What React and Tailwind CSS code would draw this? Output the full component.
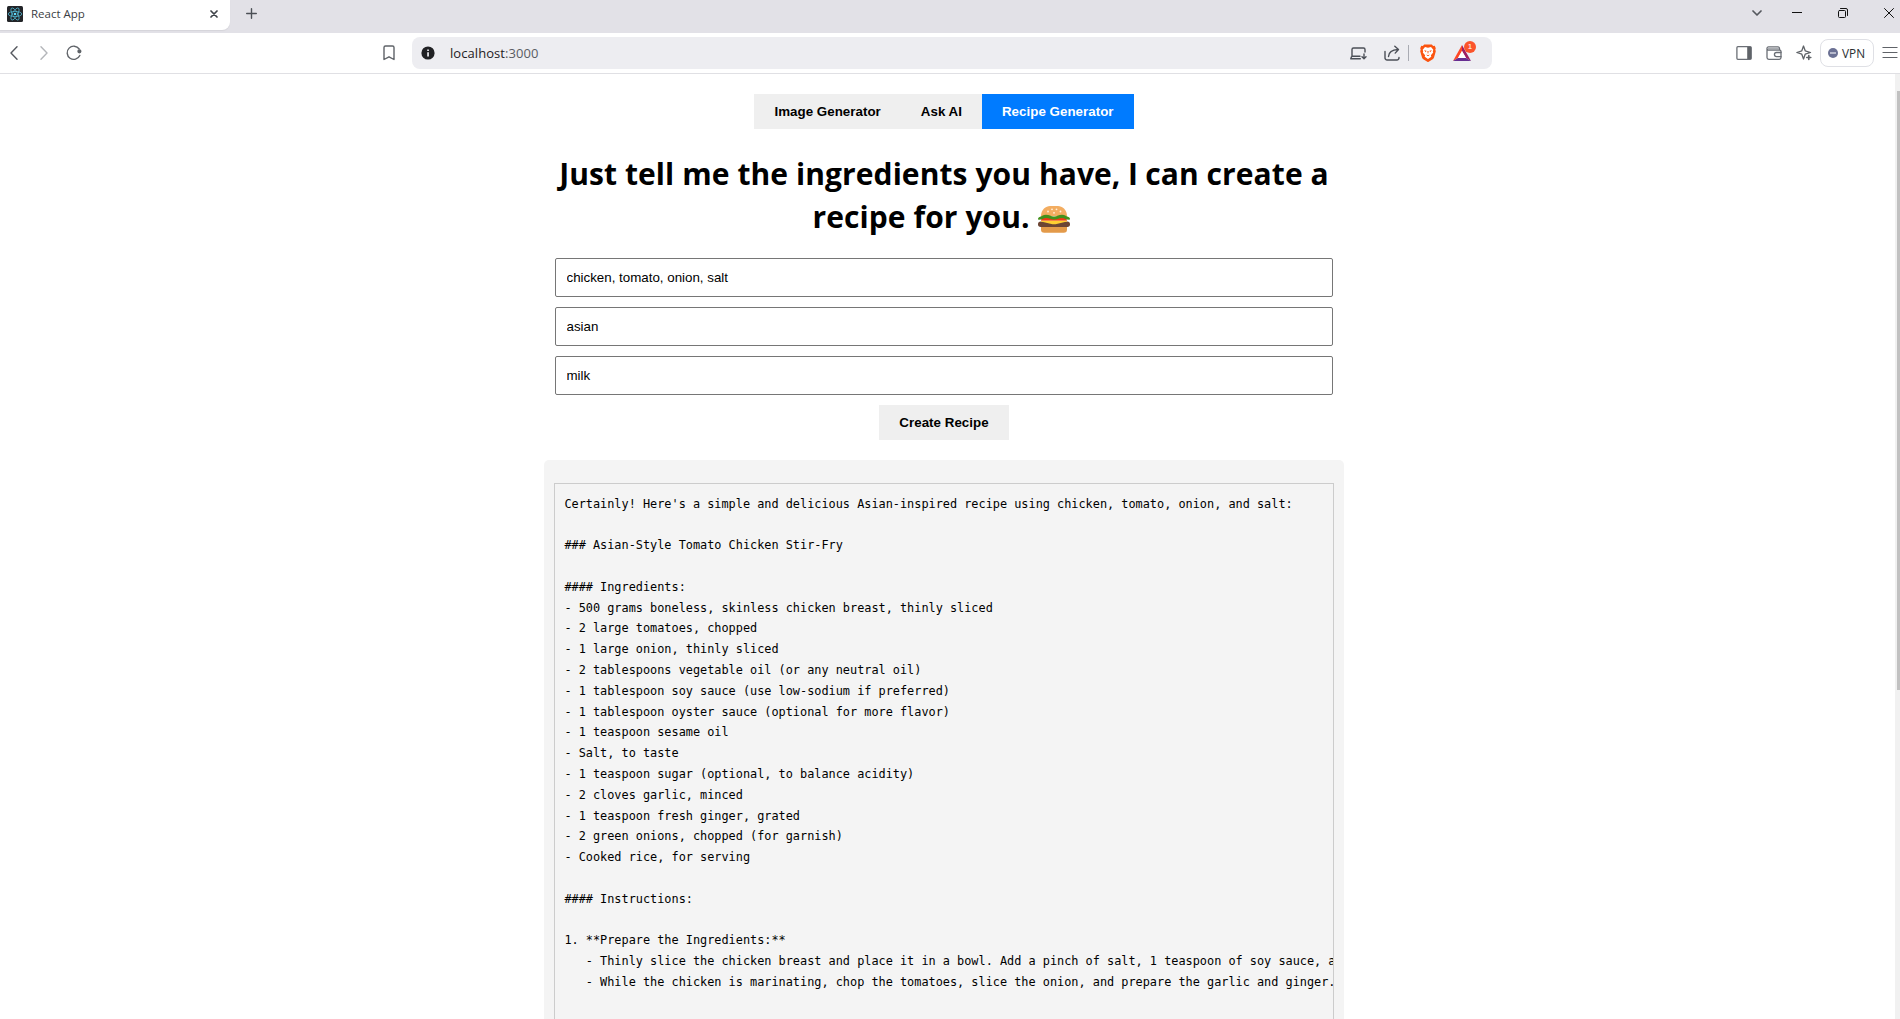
import React from "react";

const uiFont = "font-['Open_Sans',sans-serif]";
const arial = "font-['Liberation_Sans',sans-serif]";

const recipe = `Certainly! Here's a simple and delicious Asian-inspired recipe using chicken, tomato, onion, and salt:

### Asian-Style Tomato Chicken Stir-Fry

#### Ingredients:
- 500 grams boneless, skinless chicken breast, thinly sliced
- 2 large tomatoes, chopped
- 1 large onion, thinly sliced
- 2 tablespoons vegetable oil (or any neutral oil)
- 1 tablespoon soy sauce (use low-sodium if preferred)
- 1 tablespoon oyster sauce (optional for more flavor)
- 1 teaspoon sesame oil
- Salt, to taste
- 1 teaspoon sugar (optional, to balance acidity)
- 2 cloves garlic, minced
- 1 teaspoon fresh ginger, grated
- 2 green onions, chopped (for garnish)
- Cooked rice, for serving

#### Instructions:

1. **Prepare the Ingredients:**
   - Thinly slice the chicken breast and place it in a bowl. Add a pinch of salt, 1 teaspoon of soy sauce, a
   - While the chicken is marinating, chop the tomatoes, slice the onion, and prepare the garlic and ginger.

`;

function Icon({ w, h, className = "", children, stroke = "#5f6368", sw = 1.4 }) {
  return (
    <svg
      width={w}
      height={h}
      viewBox={`0 0 ${w} ${h}`}
      fill="none"
      stroke={stroke}
      strokeWidth={sw}
      strokeLinecap="round"
      strokeLinejoin="round"
      className={`shrink-0 ${className}`}
    >
      {children}
    </svg>
  );
}

function ReactLogo() {
  return (
    <svg width="16" height="16" viewBox="0 0 16 16" className="ml-[7px] shrink-0">
      <rect width="16" height="16" rx="1.5" fill="#222428" />
      <g fill="none" stroke="#4fb4cf" strokeWidth="0.8">
        <ellipse cx="8" cy="8" rx="6.8" ry="2.6" />
        <ellipse cx="8" cy="8" rx="6.8" ry="2.6" transform="rotate(60 8 8)" />
        <ellipse cx="8" cy="8" rx="6.8" ry="2.6" transform="rotate(120 8 8)" />
      </g>
      <circle cx="8" cy="8" r="1.3" fill="#61dafb" />
    </svg>
  );
}

function TabStrip() {
  return (
    <div className="flex h-[33px] items-start bg-[#e2e1e7]">
      <div className="flex h-[30px] w-[230px] items-center rounded-br-lg bg-white pb-[2px] shadow-[0_1px_1px_rgba(0,0,0,0.06)]">
        <ReactLogo />
        <span className={`ml-2 text-[11.5px] leading-4 text-[#3b3e44] ${uiFont}`}>React App</span>
        <Icon w={8} h={8} className="ml-auto mr-[12px]" stroke="#3f4349" sw={1.7}>
          <path d="M1 1l6 6M7 1l-6 6" />
        </Icon>
      </div>
      <Icon w={11} h={11} className="ml-[16px] mt-[8px]" stroke="#4b4f55" sw={1.4}>
        <path d="M5.5 .7v9.6M.7 5.5h9.6" />
      </Icon>
      <div className="ml-auto flex h-[26px] items-center">
        <Icon w={10} h={6} className="mr-[30px]" stroke="#55585e" sw={1.7}>
          <path d="M1 1l4 4 4-4" />
        </Icon>
        <Icon w={10} h={10} className="mr-[36px]" stroke="#111" sw={1}>
          <path d="M0 4.5h10" />
        </Icon>
        <Icon w={10} h={10} className="mr-[36px]" stroke="#111" sw={1}>
          <rect x=".5" y="2.5" width="7" height="7" rx="1" />
          <path d="M2.5 .5H8a1.5 1.5 0 0 1 1.5 1.5v5.5" />
        </Icon>
        <Icon w={10} h={10} className="mr-[6px]" stroke="#111" sw={1}>
          <path d="M.5 .5l9 9M9.5 .5l-9 9" />
        </Icon>
      </div>
    </div>
  );
}

function BraveLion() {
  return (
    <svg width="16" height="18" viewBox="0 0 16 18" className="ml-[11px] shrink-0">
      <path d="M4.2.4h7.6l1.4 1.5 1.5-.1 1.1 2.5-.5 1.3.5 1.7-1.8 6.2c-.2.8-.7 1.4-1.3 1.8L8.7 17.7a1.3 1.3 0 0 1-1.4 0l-4-2.4c-.6-.4-1.1-1-1.3-1.8L.2 7.3l.5-1.7L.2 4.3l1.1-2.5 1.5.1z" fill="#fb5410" />
      <path d="M5 3.1l3 .6 3-.6 2.3 2.7-.5 1.6.4 1-2.3 2.9.4 1.4L8 15l-3.3-2.3.4-1.4-2.3-2.9.4-1-.5-1.6z" fill="#fff" />
      <path d="M4 6.3l2.500.5-.6 1.400zM12 6.300l-2.500.5.6 1.400zM7.400 7h1.200l-.3 2.500h-.6zM6.200 10.500l1.800.8 1.800-.8-1.200 1.400H7.400z" fill="#fb5410" />
    </svg>
  );
}

function BatTriangle() {
  return (
    <div className="relative ml-[17px] h-8 w-[26px] shrink-0">
      <svg width="18" height="16" viewBox="0 0 18 16" className="mt-[8px]">
        <path d="M9 0L0 16l5-3 4-7z" fill="#ff4724" />
        <path d="M9 0l9 16-5-3-4-7z" fill="#9e1f63" />
        <path d="M0 16h18l-5-3H5z" fill="#662d91" />
        <path d="M9 6l4 7H5z" fill="#fff" />
      </svg>
      <span className={`absolute left-[11px] top-[4px] flex size-[12px] items-center justify-center rounded-full bg-[#fb542b] text-[8px] leading-none text-white ${arial}`}>
        1
      </span>
    </div>
  );
}

function Toolbar() {
  return (
    <div className="flex h-[41px] items-center border-b border-[#e0e0e4] bg-white">
      <Icon w={8} h={14} className="ml-[10px]" stroke="#55585f">
        <path d="M7 .8L1 7l6 6.2" />
      </Icon>
      <Icon w={8} h={14} className="ml-[22px]" stroke="#b4b6ba">
        <path d="M1 .8L7 7l-6 6.2" />
      </Icon>
      <Icon w={17} h={16} className="ml-[18px]" stroke="#5f6368">
        <path d="M13.2 4A6.6 6.6 0 1 0 13.8 10.5" />
        <circle cx="13.4" cy="6.3" r="1.4" fill="#5f6368" />
      </Icon>
      <Icon w={12} h={16} className="ml-[300px]" stroke="#5f6368">
        <path d="M2.5 1h7a1.5 1.5 0 0 1 1.5 1.5V14.5L6 11.8 1 14.5V2.5A1.5 1.5 0 0 1 2.5 1z" />
      </Icon>
      <div className="ml-[17px] flex h-8 w-[1080px] items-center rounded-lg bg-[#ededf1]">
        <Icon w={14} h={14} className="ml-[9px]" stroke="none">
          <circle cx="7" cy="7" r="6.6" fill="#202124" />
          <path d="M6.2 6.2h1.7v4.3H6.2zM6.2 3.4h1.7v1.6H6.2z" fill="#ededf1" />
        </Icon>
        <span className={`ml-[15px] text-[13px] leading-5 tracking-[0.06px] text-[#1f2024] ${uiFont}`}>
          localhost<span className="text-[#5a5c63]">:3000</span>
        </span>
        <Icon w={17} h={13} className="ml-auto" stroke="#4b4f57">
          <path d="M2 9V2.5A1.5 1.5 0 0 1 3.5 1h10A1.5 1.5 0 0 1 15 2.5V5M2 9.2h8M.8 11.8h9.5M.8 11.8l.7-2M14 7v4.5M12 9.8l2 2 2-2" />
        </Icon>
        <Icon w={16} h={16} className="ml-[17px]" stroke="#4b4f57">
          <path d="M1 6.5v6A2.2 2.2 0 0 0 3.2 15h9.6A2.2 2.2 0 0 0 15 12.5M4.500 11.500C4.800 7 7.500 4.800 14 4.500M10.800 1.200L14.500 4.500l-3.300 3.600" />
        </Icon>
        <div className="ml-[8px] h-4 w-px bg-[#a9abb3]" />
        <BraveLion />
        <BatTriangle />
        <div className="w-[13px] shrink-0" />
      </div>
      <div className="ml-auto flex items-center">
        <Icon w={16} h={14} className="mr-[14px]" stroke="#6b6f76" sw={1.3}>
          <rect x=".9" y=".7" width="14.3" height="12.6" rx="1" />
          <path d="M11.2 1h4v12h-4z" fill="#5f6368" stroke="none" />
        </Icon>
        <Icon w={16} h={14} className="mr-[14px]" stroke="#6b6f76" sw={1.3}>
          <path d="M1 2.5V11.5A1.8 1.8 0 0 0 2.8 13.3h10.5A1.7 1.7 0 0 0 15 11.6V5.5A1.5 1.5 0 0 0 13.5 4H2.5A1.5 1.5 0 0 1 2.5 .9h9.5A1.5 1.5 0 0 1 13.5 2.5V4" />
          <path d="M2 2h11v1.5H2z" fill="#a9acb1" stroke="none" />
          <path d="M15 6.5H10.5a2 2 0 0 0 0 4.1H15" />
        </Icon>
        <Icon w={16} h={16} className="mr-[8px]" stroke="#5f6368" sw={1.3}>
          <path d="M7.5 1L9.2 5.8 14.5 7.5 9.2 9.2 7.5 14 5.8 9.2 .8 7.5 5.8 5.8z" />
          <path d="M12.8 10.5v4M10.8 12.5h4" strokeWidth="1.6" />
        </Icon>
        <div className="flex h-7 w-[54px] items-center rounded-lg border border-[#dfe0e5] bg-white pl-[7px]">
          <Icon w={10} h={10} stroke="none">
            <circle cx="5" cy="5" r="5" fill="#6b7194" />
            <path d="M2 4.3h6v1.4H2z" fill="#d8dae6" />
          </Icon>
          <span className={`ml-1 text-[11.8px] leading-4 text-[#2a2c31] ${uiFont}`}>VPN</span>
        </div>
        <Icon w={16} h={12} className="ml-[8px] mr-[2px]" stroke="#5f6368" sw={1.2}>
          <path d="M1 .5h14M1 5.5h14M1 10.500h14" />
        </Icon>
      </div>
    </div>
  );
}

function Burger() {
  return (
    <svg width="32" height="27" viewBox="0 0 32 27" className="mb-[-5px] mr-[6px] inline-block align-baseline">
      <path d="M3 10C3 3.5 8 0 12 0h8c4 0 9 3.5 9 10z" fill="#f3ad61" />
      <g fill="#fff1dc">
        <circle cx="10" cy="5.5" r=".9" />
        <circle cx="14" cy="3.3" r=".9" />
        <circle cx="18.5" cy="3.3" r=".9" />
        <circle cx="22.5" cy="5.5" r=".9" />
        <circle cx="16" cy="6.8" r=".9" />
      </g>
      <path d="M3 20h26v3.5a3.3 3.3 0 0 1-3.3 3.3H6.3A3.3 3.3 0 0 1 3 23.5z" fill="#e39a4a" />
      <rect y="15.5" width="32" height="5.5" rx="2.7" fill="#6d4534" />
      <path d="M3 14.800c0-3 4-4 7-3.600 4 .6 8 .6 12 0 3-.4 7 .6 7 3.600z" fill="#f03a17" />
      <path d="M3 14.800h26v.8L17.500 18.300h-3L3 15.600z" fill="#ffce31" />
      <path d="M1 13.8c-1.3 0-1.3-2 0-2.6C3.5 10.5 5 8.8 8 8.8c3.5 0 4.5 1.7 8 1.7s4.5-1.7 8-1.7c3 0 4.5 1.7 7 2.4 1.3.6 1.3 2.6 0 2.6-3 0-4.5-1.8-7-1.8-3.5 0-4.5 1.5-8 1.5s-4.5-1.5-8-1.5c-2.5 0-4 1.8-7 1.8z" fill="#44911b" />
    </svg>
  );
}

function TabButton({ active, children }) {
  return (
    <button
      className={`h-[35px] px-5 text-[13.333px] font-bold leading-[15px] tracking-[0.03px] ${arial} ${
        active ? "bg-[#007bff] text-white" : "bg-[#efefef] text-black"
      }`}
    >
      {children}
    </button>
  );
}

function Field({ value }) {
  return (
    <input
      readOnly
      value={value}
      className={`mx-auto mb-[10px] block h-[39px] w-[778px] rounded-[2px] border border-[#767676] bg-white px-[10.5px] text-[13.333px] leading-[15px] text-black outline-none ${arial}`}
    />
  );
}

function RecipePage() {
  return (
    <main className="w-[800px] pt-5 text-center">
      <nav className="flex justify-center">
        <TabButton>Image Generator</TabButton>
        <TabButton>Ask AI</TabButton>
        <TabButton active>Recipe Generator</TabButton>
      </nav>
      <h1 className={`mb-5 mt-[23px] whitespace-nowrap text-[30px] font-bold leading-[43px] tracking-[0.08px] text-black ${uiFont}`}>
        Just tell me the ingredients you have,{" "}
        <span className={`text-[32px] leading-none ${arial}`}>I</span> can create a
        <br />
        recipe for you. <Burger />
      </h1>
      <Field value="chicken, tomato, onion, salt" />
      <Field value="asian" />
      <Field value="milk" />
      <div className="flex justify-center">
        <TabButton>Create Recipe</TabButton>
      </div>
      <section className="mt-5 rounded-[5px] bg-[#f4f4f4] px-[10px] pt-[23px] text-left">
        <pre className="h-[700px] overflow-hidden border border-[#ccc] py-[9.7px] pl-[9.4px] font-['DejaVu_Sans_Mono',monospace] text-[11.878px] leading-[20.8px] text-black">
          {recipe}
        </pre>
      </section>
    </main>
  );
}

export default function App() {
  return (
    <div className="flex h-[1019px] w-[1900px] flex-col overflow-hidden bg-white">
      <TabStrip />
      <Toolbar />
      <div className="flex min-h-0 flex-1 overflow-hidden">
        <div className="flex flex-1 justify-center overflow-hidden pr-[7px]">
          <RecipePage />
        </div>
        <div className="w-[5px] bg-[#f1f1f1] pl-[2px] pt-[17px]">
          <div className="h-[599px] bg-[#c1c1c1]" />
        </div>
      </div>
    </div>
  );
}
